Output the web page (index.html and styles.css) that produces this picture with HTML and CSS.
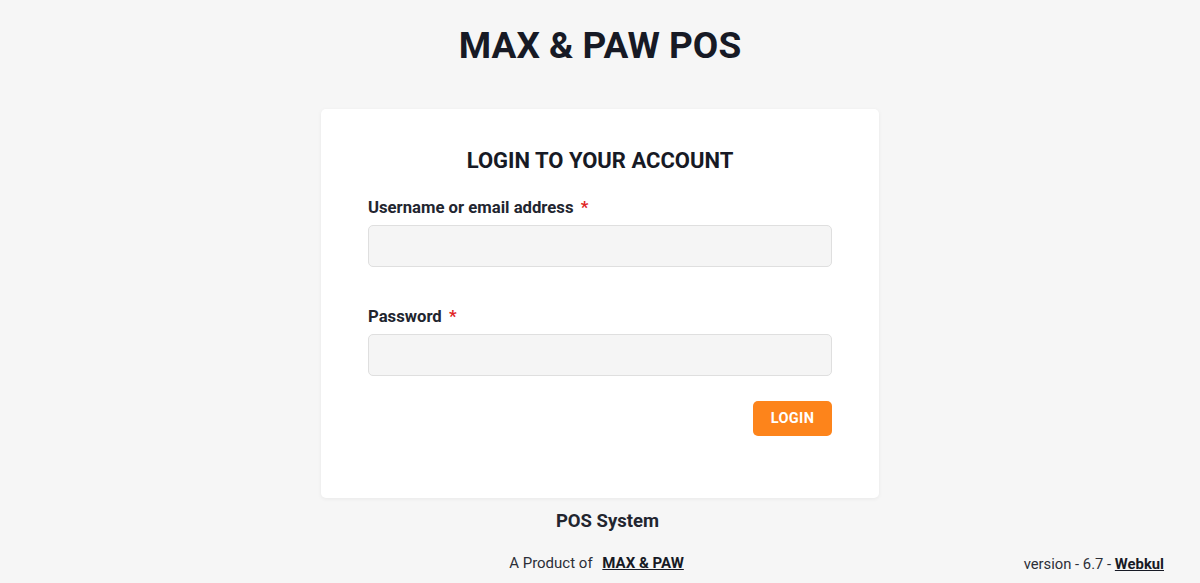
FILE: index.html
```html
<!DOCTYPE html>
<html>
<head>
<meta charset="utf-8">
<link rel="stylesheet" href="styles.css">
</head>
<body>
<div class="page">
  <h1 class="brand">MAX &amp; PAW POS</h1>
  <div class="card">
    <h2 class="card-title">LOGIN TO YOUR ACCOUNT</h2>
    <div class="field">
      <label class="label">Username or email address <span class="req">*</span></label>
      <input class="input" type="text">
    </div>
    <div class="field">
      <label class="label">Password <span class="req">*</span></label>
      <input class="input" type="password">
    </div>
    <div class="actions">
      <button class="btn">LOGIN</button>
    </div>
  </div>
  <div class="system">POS System</div>
  <div class="footer">
    <div class="product">A Product of <a class="link" href="#">MAX &amp; PAW</a></div>
    <div class="version">version - 6.7 - <a class="link" href="#">Webkul</a></div>
  </div>
</div>
</body>
</html>
```

FILE: styles.css
```css
html, body {
  margin: 0;
  padding: 0;
  background: #f6f6f6;
  font-family: Roboto, "Liberation Sans", sans-serif;
  color: #1c1c28;
}
.page {
  display: flex;
  flex-direction: column;
  align-items: center;
  height: 583px;
}
.brand {
  margin: 25px 0 0;
  font-size: 37px;
  font-weight: 700;
  line-height: 42px;
  color: #171a25;
}
.card {
  margin-top: 42px;
  width: 558px;
  box-sizing: border-box;
  background: #fff;
  border-radius: 5px;
  box-shadow: 0 1px 4px rgba(0,0,0,0.06);
  padding: 38px 47px 62px;
  display: flex;
  flex-direction: column;
}
.card-title {
  margin: 0;
  text-align: center;
  font-size: 22px;
  font-weight: 700;
  line-height: 28px;
  color: #171a25;
}
.field {
  display: flex;
  flex-direction: column;
}
.field:first-of-type {
  margin-top: 23px;
}
.field + .field {
  margin-top: 40px;
}
.label {
  font-size: 16.7px;
  font-weight: 700;
  line-height: 20px;
  color: #22252f;
  margin-bottom: 7px;
}
.req {
  color: #e02424;
  margin-left: 3px;
}
.input {
  height: 42px;
  box-sizing: border-box;
  border: 1px solid #dfdfdf;
  border-radius: 5px;
  background: #f5f5f5;
  font-family: inherit;
}
.actions {
  display: flex;
  justify-content: flex-end;
  margin-top: 25px;
}
.btn {
  width: 79px;
  height: 35px;
  border: none;
  border-radius: 5px;
  background: #fd841b;
  color: #fff;
  font-family: Roboto, "Liberation Sans", sans-serif;
  font-size: 14.5px;
  font-weight: 700;
  letter-spacing: 0.4px;
  padding: 0;
}
.system {
  margin-top: 12px;
  margin-left: 15px;
  font-size: 18.5px;
  font-weight: 700;
  line-height: 22px;
  color: #22252f;
}
.footer {
  width: 100%;
  position: relative;
  margin-top: 21px;
  display: flex;
  justify-content: center;
}
.product {
  margin-right: 7px;
  font-size: 15px;
  line-height: 20px;
  color: #2c2f38;
}
.product .link {
  margin-left: 6px;
}
.link {
  color: #171a25;
  font-weight: 700;
  text-decoration: underline;
}
.version {
  position: absolute;
  right: 36px;
  top: 1px;
  font-size: 14.8px;
  line-height: 20px;
  color: #2c2f38;
}
```
